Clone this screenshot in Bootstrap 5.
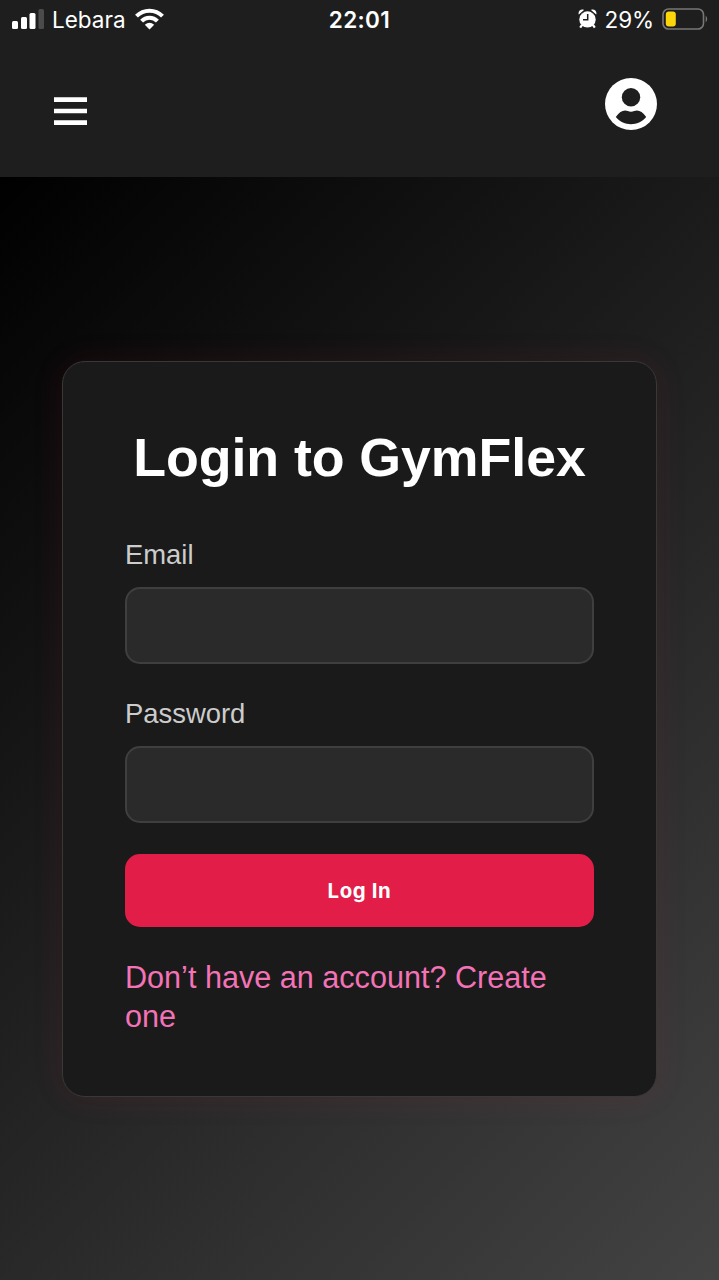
<!DOCTYPE html>
<html lang="en" data-bs-theme="dark">
<head>
<meta charset="utf-8">
<meta name="viewport" content="width=device-width, initial-scale=1">
<title>GymFlex – Login</title>
<link href="https://cdn.jsdelivr.net/npm/bootstrap@5.3.0/dist/css/bootstrap.min.css" rel="stylesheet">
<style>
body{font-family:"Liberation Sans",Arial,sans-serif;background:#1e1e1e;color:#fff}
.status-bar{height:38px;padding:0 11px 0 12px;font-family:Inter,sans-serif;font-size:22.5px;line-height:40px}
.status-bar svg,.top-bar svg{display:block;flex:none}
.status-side{flex:1 1 0}
.carrier{margin:2px 9px 0 8px;letter-spacing:0}
.clock{font-weight:600;letter-spacing:.35px;margin:2px 0 0 -1px}
.charge{margin:2px 8px 0 8px;letter-spacing:-.1px}
.top-bar{height:139px;padding:40px 62px 0 54px}
.menu-btn{padding:19px 0 0}
.stage{background:linear-gradient(135deg,#000 0%,#434343 100%);padding-top:184px}
.login-card{width:595px;height:736px;padding:59px 62px 0;background:#1a1a1a;border:1px solid #383838;border-radius:23px;box-shadow:0 0 32px rgba(225,29,72,.1)}
.login-card h1{font-size:53.7px;line-height:72px;margin:0 -10px 42px;font-weight:700;letter-spacing:-.05px}
.form-label{font-size:27.4px;line-height:40px;margin-bottom:12px;color:#ccc}
.form-control,.form-control:focus{height:77px;background:#2a2a2a;border:2px solid #3f3f3f;border-radius:15px}
.field-gap{margin-top:30px}
.btn-login{height:73px;margin-top:31px;border:0;border-radius:15px;background:#e11d48;color:#fff;font:700 20.4px/73px Inter,sans-serif;letter-spacing:.6px;padding:0}
.signup-link{margin-top:31px;font-size:30.6px;line-height:39px;color:#f472b6}
</style>
</head>
<body>
<div class="d-flex flex-column min-vh-100">
  <div class="status-bar d-flex align-items-center">
    <div class="status-side d-flex align-items-center">
      <svg width="32" height="20" viewBox="0 0 32 20" fill="#fff"><rect y="12" width="6" height="8" rx="1.5"/><rect x="9" y="8" width="6" height="12" rx="1.5"/><rect x="17.5" y="4" width="6" height="16" rx="1.5"/><rect x="26.5" width="5.5" height="20" rx="1.5" fill="#4b4b4b"/></svg>
      <span class="carrier">Lebara</span>
      <svg width="29" height="22" viewBox="0 0 29 22"><path d="M1.5 8.2A18 18 0 0 1 27.5 8.2M6.6 13.2A11 11 0 0 1 22.4 13.2" fill="none" stroke="#fff" stroke-width="4"/><path d="M9.8 16.8Q14.5 12.6 19.2 16.8L14.5 21.5Z" fill="#fff"/></svg>
    </div>
    <span class="clock">22:01</span>
    <div class="status-side d-flex align-items-center justify-content-end">
      <svg width="19" height="20" viewBox="0 0 19 20"><circle cx="9.5" cy="10.4" r="8.2" fill="#fff"/><path d="M.8 5.6C-.4 2.2 2.8-.3 6 .9ZM13 .9C16.2-.3 19.4 2.2 18.2 5.6Z" fill="#fff"/><path d="M4 16 2.2 18.6M15 16l1.8 2.6" stroke="#fff" stroke-width="2.2"/><path d="M1 7 7.3 1.4M18 7 11.7 1.4" stroke="#1e1e1e" stroke-width=".7"/><path d="M9.7 5v5.8H5" fill="none" stroke="#1e1e1e" stroke-width="1.5"/></svg>
      <span class="charge">29%</span>
      <svg width="46" height="22" viewBox="0 0 46 22"><rect x="1" y="1" width="40.5" height="20" rx="5.5" fill="none" stroke="#777" stroke-width="1.6"/><rect x="3.8" y="3.6" width="10" height="14.8" rx="3" fill="#fcd60a"/><path d="M43.7 7.5q3 3.5 0 7Z" fill="#777"/></svg>
    </div>
  </div>
  <nav class="top-bar d-flex justify-content-between align-items-start" aria-label="Main">
    <button class="menu-btn btn border-0" aria-label="Menu"><svg width="33" height="29" viewBox="0 0 33 29"><path d="M0 2.6h33M0 14h33M0 25.6h33" stroke="#fff" stroke-width="4.6"/></svg></button>
    <a href="#" aria-label="Account"><svg width="52" height="52" viewBox="0 0 52 52"><circle cx="26" cy="26" r="26" fill="#fff"/><circle cx="26" cy="19.2" r="9.2" fill="#1e1e1e"/><path d="M10.8 39Q15.5 32.6 20 32.6C22 32.6 23.5 33.7 26 33.7S30 32.6 32 32.6Q36.5 32.6 41.2 39C37 44 31.5 46.2 26 46.2S15 44 10.8 39Z" fill="#1e1e1e"/></svg></a>
  </nav>
  <main class="stage flex-grow-1">
    <section class="login-card mx-auto">
      <h1 class="text-center text-nowrap">Login to GymFlex</h1>
      <form>
        <label class="form-label d-block" for="email">Email</label>
        <input class="form-control" id="email" type="email">
        <label class="form-label field-gap d-block" for="password">Password</label>
        <input class="form-control" id="password" type="password">
        <button class="btn btn-login w-100 d-block" type="button">Log In</button>
      </form>
      <a class="signup-link d-block text-decoration-none" href="#">Don’t have an account? Create one</a>
    </section>
  </main>
</div>
<script src="https://cdn.jsdelivr.net/npm/bootstrap@5.3.0/dist/js/bootstrap.bundle.min.js"></script>
</body>
</html>
